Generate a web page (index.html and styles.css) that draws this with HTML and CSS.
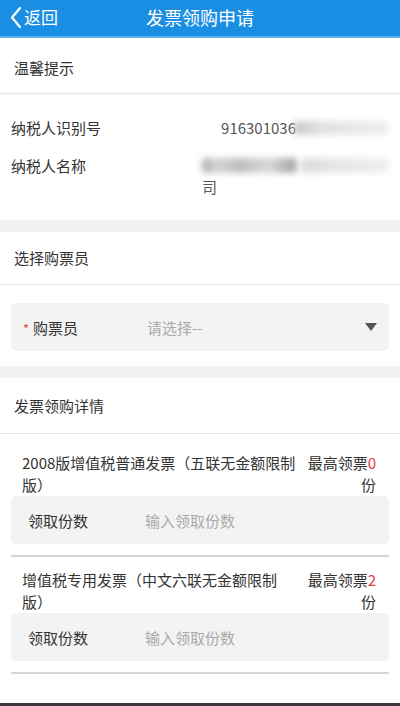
FILE: index.html
```html
<!DOCTYPE html>
<html lang="zh-CN">
<head>
<meta charset="utf-8">
<title>发票领购申请</title>
<link rel="stylesheet" href="styles.css">
</head>
<body>
<div class="page">
  <header class="topbar">
    <a class="back">
      <svg class="back-icon" width="14" height="24" viewBox="0 0 14 24"><polyline points="11,3 3,12.5 11,22" fill="none" stroke="#ffffff" stroke-width="2.2" stroke-linecap="round" stroke-linejoin="round"/></svg>
      <span class="back-text">返回</span>
    </a>
    <h1 class="title">发票领购申请</h1>
  </header>

  <section class="sec-title tip">温馨提示</section>
  <div class="gap-thin"></div>

  <section class="info">
    <div class="info-row">
      <span class="info-label">纳税人识别号</span>
      <span class="info-value id-value">916301036<span class="blur blur-id"></span></span>
    </div>
    <div class="info-row">
      <span class="info-label">纳税人名称</span>
      <span class="info-value name-value"><span class="name-line"><span class="blur blur-name1"></span><span class="blur blur-name2"></span></span>司</span>
    </div>
  </section>
  <div class="gap"></div>

  <section class="sec-title bordered">选择购票员</section>
  <div class="select-area">
    <div class="field">
      <span class="req">*</span>
      <span class="field-label">购票员</span>
      <span class="field-placeholder">请选择--</span>
      <span class="caret"></span>
    </div>
  </div>
  <div class="gap"></div>

  <section class="sec-title bordered detail">发票领购详情</section>
  <div class="items">
    <div class="item">
      <div class="item-head">
        <span class="item-name">2008版增值税普通发票（五联无金额限制<br>版）</span>
        <span class="item-max">最高领票<em>0</em><br>份</span>
      </div>
      <div class="field input">
        <span class="input-label">领取份数</span>
        <span class="field-placeholder">输入领取份数</span>
      </div>
      <div class="rule"></div>
    </div>
    <div class="item">
      <div class="item-head">
        <span class="item-name">增值税专用发票（中文六联无金额限制<br>版）</span>
        <span class="item-max">最高领票<em>2</em><br>份</span>
      </div>
      <div class="field input">
        <span class="input-label">领取份数</span>
        <span class="field-placeholder">输入领取份数</span>
      </div>
      <div class="rule"></div>
    </div>
  </div>
  <div class="spacer"></div>
  <div class="bottom-bar"></div>
</div>
</body>
</html>
```

FILE: styles.css
```css
* { box-sizing: border-box; }
html, body { margin: 0; padding: 0; }
body {
  font-family: "Noto Sans CJK SC", "Microsoft YaHei", "Liberation Sans", sans-serif;
  color: #333;
  background: #fff;
  text-spacing-trim: space-all;
}
.page {
  width: 400px;
  height: 706px;
  display: flex;
  flex-direction: column;
  overflow: hidden;
}
.topbar {
  height: 38px;
  background: #1a8ee2;
  border-bottom: 2px solid #5db3ef;
  position: relative;
  display: flex;
  align-items: center;
  justify-content: center;
}
.back {
  position: absolute;
  left: 9px;
  top: 5px;
  display: flex;
  align-items: center;
  color: #fff;
}
.back-icon { display: block; }
.back-text {
  font-size: 17px;
  line-height: 24px;
  margin-left: 1px;
}
.title {
  margin: 0;
  font-size: 18px;
  font-weight: normal;
  color: #fff;
  line-height: 24px;
  margin-top: -2px;
}
.sec-title {
  font-size: 15px;
  line-height: 22px;
  padding: 19px 14px 13px;
  color: #333;
}
.bordered {
  padding: 15px 14px 15px;
  border-bottom: 1px solid #e6e6e6;
  height: 53px;
}
.detail {
  padding: 17px 14px 16px;
  height: 56px;
}
.gap-thin { height: 3px; background: #f1f1f1; }
.gap { height: 12px; background: #f1f1f1; }
.info {
  padding: 22px 11px 23px;
  display: flex;
  flex-direction: column;
  gap: 17px;
}
.info-row {
  display: flex;
  font-size: 15px;
  line-height: 21px;
}
.info-label { width: 193px; color: #333; }
.info-value { color: #555; display: flex; flex-direction: column; }
.id-value {
  display: flex;
  flex-direction: row;
  align-items: center;
  padding-left: 18px;
}
.blur {
  display: inline-block;
  filter: blur(3px);
  border-radius: 4px;
}
.blur-id {
  width: 95px;
  height: 14px;
  background: linear-gradient(90deg, #c8c8c8 0%, #e2e2e2 30%, #eeeeee 100%);
  margin-left: -2px;
}
.name-line { display: flex; height: 21px; align-items: center; }
.blur-name1 {
  width: 95px;
  height: 15px;
  background: linear-gradient(90deg, #aaa 0%, #d4d4d4 15%, #bdbdbd 40%, #d8d8d8 70%, #a9a9a9 95%);
}
.blur-name2 {
  width: 88px;
  height: 15px;
  margin-left: 4px;
  background: linear-gradient(90deg, #dcdcdc 0%, #e6e6e6 40%, #efefef 100%);
}
.select-area { padding: 18px 11px 15px; }
.field {
  height: 48px;
  background: #f3f3f3;
  border-radius: 5px;
  display: flex;
  align-items: center;
  padding-left: 12px;
  font-size: 15px;
  position: relative;
}
.req {
  color: #e64a4a;
  font-size: 13px;
  width: 10px;
  margin-top: 2px;
}
.field-label { width: 114px; color: #333; }
.field-placeholder { color: #aaa; }
.caret {
  position: absolute;
  right: 12px;
  top: 20px;
  width: 0;
  height: 0;
  border-left: 6px solid transparent;
  border-right: 6px solid transparent;
  border-top: 8px solid #555;
}
.items { padding-top: 6px; }
.item { padding-top: 12px; }
.item-head {
  display: flex;
  justify-content: space-between;
  padding: 0 24px 0 22px;
  font-size: 15px;
  line-height: 22px;
  color: #333;
}
.item-max { text-align: right; flex: none; }
.item-max em { font-style: normal; color: #e23b3b; }
.field.input {
  margin: 0 11px;
  padding-left: 17px;
}
.input-label { width: 117px; color: #333; }
.rule {
  margin: 11px 11px 0;
  height: 2px;
  background: #d6d6d6;
  border-radius: 1px;
}
.spacer { flex: 1; }
.bottom-bar { height: 3px; background: #3a3a3a; }
```
